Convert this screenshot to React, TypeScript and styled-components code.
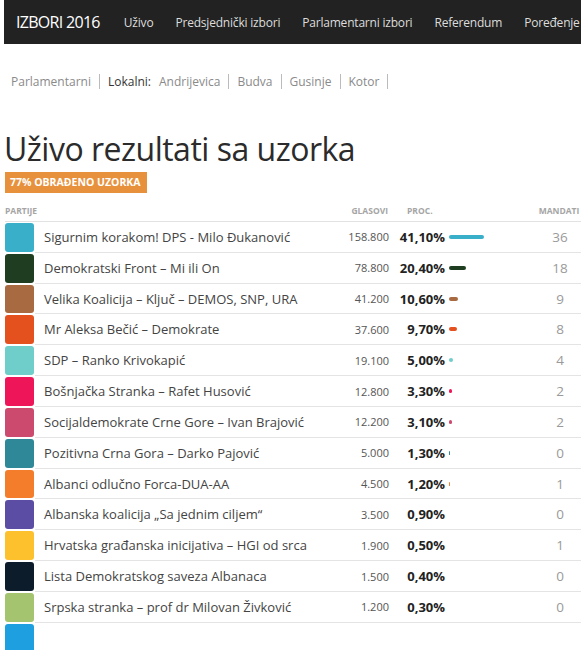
import styled, { createGlobalStyle } from "styled-components";

const GlobalStyle = createGlobalStyle`
  body {
    margin: 0;
    background: #fff;
    font-family: "Open Sans", "Noto Sans", sans-serif;
    overflow: hidden;
  }
`;

type Party = {
  name: string;
  color: string;
  votes: string;
  pct: number;
  seats: number;
};

const parties: Party[] = [
  { name: "Sigurnim korakom! DPS - Milo Đukanović", color: "#3aafca", votes: "158.800", pct: 41.1, seats: 36 },
  { name: "Demokratski Front – Mi ili On", color: "#1f3d20", votes: "78.800", pct: 20.4, seats: 18 },
  { name: "Velika Koalicija – Ključ – DEMOS, SNP, URA", color: "#a86a40", votes: "41.200", pct: 10.6, seats: 9 },
  { name: "Mr Aleksa Bečić – Demokrate", color: "#e5501f", votes: "37.600", pct: 9.7, seats: 8 },
  { name: "SDP – Ranko Krivokapić", color: "#6fcdca", votes: "19.100", pct: 5.0, seats: 4 },
  { name: "Bošnjačka Stranka – Rafet Husović", color: "#ee1659", votes: "12.800", pct: 3.3, seats: 2 },
  { name: "Socijaldemokrate Crne Gore – Ivan Brajović", color: "#cb4a6d", votes: "12.200", pct: 3.1, seats: 2 },
  { name: "Pozitivna Crna Gora – Darko Pajović", color: "#2e8898", votes: "5.000", pct: 1.3, seats: 0 },
  { name: "Albanci odlučno Forca-DUA-AA", color: "#f47d2b", votes: "4.500", pct: 1.2, seats: 1 },
  { name: "Albanska koalicija „Sa jednim ciljem“", color: "#5a4da3", votes: "3.500", pct: 0.9, seats: 0 },
  { name: "Hrvatska građanska inicijativa – HGI od srca", color: "#fcc12c", votes: "1.900", pct: 0.5, seats: 1 },
  { name: "Lista Demokratskog saveza Albanaca", color: "#0c1c2b", votes: "1.500", pct: 0.4, seats: 0 },
  { name: "Srpska stranka – prof dr Milovan Živković", color: "#a4c46f", votes: "1.200", pct: 0.3, seats: 0 },
  { name: "", color: "#1e9fe0", votes: "", pct: 0, seats: -1 },
];

const navLinks = ["Uživo", "Predsjednički izbori", "Parlamentarni izbori", "Referendum", "Poređenje"];

const Page = styled.div`
  width: 581px;
  overflow: hidden;
  padding-left: 4px;
  box-sizing: border-box;
`;

const NavBar = styled.nav`
  height: 44px;
  background: #222;
  display: flex;
  align-items: center;
  padding-left: 12px;
  white-space: nowrap;
  overflow: hidden;
`;

const Logo = styled.span`
  color: #fff;
  font-size: 16px;
  letter-spacing: -0.7px;
  margin-right: 24px;
`;

const NavLink = styled.a`
  color: #ddd;
  font-size: 12px;
  letter-spacing: -0.2px;
  margin-right: 22px;
`;

const SubNav = styled.div`
  display: flex;
  align-items: center;
  margin-top: 27px;
  padding-left: 7px;
  font-size: 12px;
  color: #8a8a8a;
  height: 20px;
`;

const SubItem = styled.span<{ $strong?: boolean }>`
  color: ${(p) => (p.$strong ? "#333" : "#8a8a8a")};
  margin-right: ${(p) => (p.$strong ? "8px" : "0")};
`;

const Sep = styled.span`
  width: 1px;
  height: 15px;
  background: #bbb;
  margin: 0 8px;
`;

const Title = styled.h1`
  margin: 38px 0 0 0;
  font-weight: 400;
  font-size: 32px;
  line-height: 40px;
  color: #2b2b2b;
  letter-spacing: -0.5px;
`;

const Badge = styled.div`
  display: inline-block;
  margin-top: 2px;
  margin-left: 1px;
  background: #e8913c;
  color: #fff;
  font-weight: 700;
  font-size: 10.5px;
  padding: 0 6px 0 5px;
  height: 21px;
  line-height: 21px;
`;

const Table = styled.div`
  margin-left: 1px;
  margin-top: 6px;
`;

const cols = "29px 294px 60px 56px 93px 44px";

const HeadRow = styled.div`
  display: grid;
  grid-template-columns: ${cols};
  height: 22px;
  align-items: center;
  border-bottom: 1px solid #e2e2e2;
  font-size: 8.5px;
  font-weight: 700;
  color: #a5a5a5;
  text-transform: uppercase;
`;

const HeadCell = styled.div<{ $align?: string; $pad?: string }>`
  text-align: ${(p) => p.$align || "left"};
  padding-left: ${(p) => p.$pad || "0"};
  white-space: nowrap;
`;

const Row = styled.div`
  display: grid;
  grid-template-columns: ${cols};
  height: 30.83px;
  align-items: center;
`;

const Swatch = styled.div<{ $color: string }>`
  align-self: stretch;
  margin: 1px 0;
  background: ${(p) => p.$color};
  border-radius: 3px;
`;

const Cells = styled.div`
  grid-column: 2 / 7;
  display: grid;
  grid-template-columns: 294px 60px 56px 93px 44px;
  align-items: center;
  align-self: stretch;
  border-bottom: 1px solid #e4e4e4;
  margin-left: 1px;
`;

const Name = styled.div`
  padding-left: 9px;
  font-size: 13px;
  color: #444;
  white-space: nowrap;
`;

const Votes = styled.div`
  text-align: right;
  font-size: 11px;
  color: #555;
`;

const Pct = styled.div`
  text-align: right;
  font-size: 13px;
  font-weight: 700;
  color: #222;
`;

const BarCell = styled.div`
  padding-left: 4px;
  display: flex;
  align-items: center;
`;

const Bar = styled.div<{ $color: string }>`
  height: 4px;
  border-radius: 2px;
  background: ${(p) => p.$color};
`;

const Seats = styled.div`
  text-align: center;
  font-size: 13.5px;
  color: #9a9a9a;
`;

function fmt(n: number) {
  return n.toFixed(2).replace(".", ",") + "%";
}

export default function App() {
  return (
    <Page>
      <GlobalStyle />
      <NavBar>
        <Logo>IZBORI 2016</Logo>
        {navLinks.map((l) => (
          <NavLink key={l}>{l}</NavLink>
        ))}
      </NavBar>
      <SubNav>
        <SubItem>Parlamentarni</SubItem>
        <Sep />
        <SubItem $strong>Lokalni:</SubItem>
        <SubItem>Andrijevica</SubItem>
        <Sep />
        <SubItem>Budva</SubItem>
        <Sep />
        <SubItem>Gusinje</SubItem>
        <Sep />
        <SubItem>Kotor</SubItem>
        <Sep />
      </SubNav>
      <Title>Uživo rezultati sa uzorka</Title>
      <Badge>77% OBRAĐENO UZORKA</Badge>
      <Table>
        <HeadRow>
          <HeadCell>Partije</HeadCell>
          <div />
          <HeadCell $align="right">Glasovi</HeadCell>
          <HeadCell $pad="19px">Proc.</HeadCell>
          <div />
          <HeadCell $align="center">Mandati</HeadCell>
        </HeadRow>
        {parties.map((p, i) => {
          const w = p.pct * 0.85;
          return (
            <Row key={i}>
              <Swatch $color={p.color} />
              <Cells>
                <Name>{p.name}</Name>
                <Votes>{p.votes}</Votes>
                <Pct>{p.name ? fmt(p.pct) : ""}</Pct>
                <BarCell>
                  {p.pct >= 1 && <Bar $color={p.color} style={{ width: Math.max(w, 1) }} />}
                </BarCell>
                <Seats>{p.seats >= 0 ? p.seats : ""}</Seats>
              </Cells>
            </Row>
          );
        })}
      </Table>
    </Page>
  );
}
